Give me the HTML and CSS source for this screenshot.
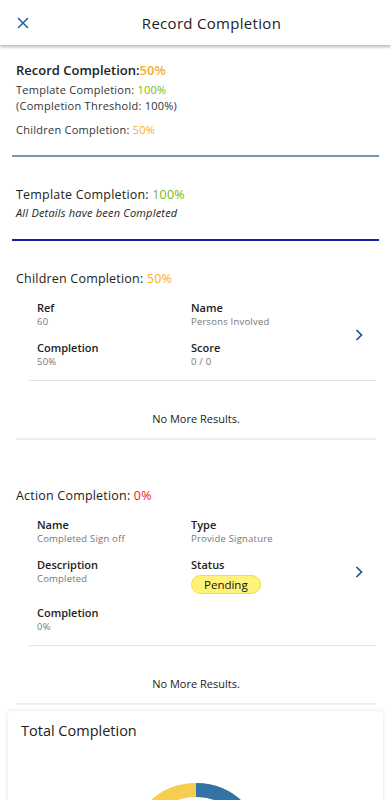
FILE: index.html
```html
<!DOCTYPE html>
<html>
<head>
    <title>Record Completion</title>
    <link rel="stylesheet" href="styles.css">
</head>
<body>
    <!-- Top bar -->
    <header class="topbar">
        <svg class="close-icon" width="12" height="12" viewBox="0 0 12 12">
            <path d="M1,1 L11,11 M11,1 L1,11" stroke="#1f5fa6" stroke-width="1.5" fill="none"/>
        </svg>
        <h1 class="title">Record Completion</h1>
    </header>

    <!-- Summary -->
    <section class="summary">
        <div class="summary-main">Record Completion:<span class="orange">50%</span></div>
        <div class="summary-line">Template Completion: <span class="green">100%</span></div>
        <div class="summary-line">(Completion Threshold: 100%)</div>
        <div class="summary-line children">Children Completion: <span class="orange">50%</span></div>
    </section>

    <hr class="rule rule-slate">

    <section class="template">
        <div class="section-head">Template Completion: <span class="green">100%</span></div>
        <div class="note">All Details have been Completed</div>
    </section>

    <hr class="rule rule-navy">

    <!-- Children -->
    <section class="block children-block">
        <div class="section-head">Children Completion: <span class="orange">50%</span></div>
        <div class="item">
            <div class="field">
                <div class="label">Ref</div>
                <div class="value">60</div>
            </div>
            <div class="field">
                <div class="label">Name</div>
                <div class="value">Persons Involved</div>
            </div>
            <div class="chevron">
                <svg width="8" height="12" viewBox="0 0 8 12"><path d="M1.5,1 L6.5,6 L1.5,11" stroke="#1c4a8f" stroke-width="1.6" fill="none"/></svg>
            </div>
            <div class="field">
                <div class="label">Completion</div>
                <div class="value">50%</div>
            </div>
            <div class="field">
                <div class="label">Score</div>
                <div class="value">0 / 0</div>
            </div>
        </div>
        <div class="no-more">No More Results.</div>
    </section>

    <!-- Actions -->
    <section class="block action-block">
        <div class="section-head">Action Completion: <span class="red">0%</span></div>
        <div class="item">
            <div class="field">
                <div class="label">Name</div>
                <div class="value">Completed Sign off</div>
            </div>
            <div class="field">
                <div class="label">Type</div>
                <div class="value">Provide Signature</div>
            </div>
            <div class="chevron">
                <svg width="8" height="12" viewBox="0 0 8 12"><path d="M1.5,1 L6.5,6 L1.5,11" stroke="#1c4a8f" stroke-width="1.6" fill="none"/></svg>
            </div>
            <div class="field">
                <div class="label">Description</div>
                <div class="value">Completed</div>
            </div>
            <div class="field">
                <div class="label">Status</div>
                <span class="pill">Pending</span>
            </div>
            <div class="field">
                <div class="label">Completion</div>
                <div class="value">0%</div>
            </div>
        </div>
        <div class="no-more">No More Results.</div>
    </section>

    <!-- Total -->
    <section class="card">
        <h2 class="card-title">Total Completion</h2>
        <div class="chart">
            <svg width="160" height="160" viewBox="0 0 160 160">
                <circle cx="80" cy="80" r="61" fill="none" stroke="#f5cd4f" stroke-width="14"/>
                <path d="M80,19 A61,61 0 0 1 80,141" fill="none" stroke="#3274a8" stroke-width="14"/>
            </svg>
        </div>
    </section>
</body>
</html>
```

FILE: styles.css
```css
body {
    margin: 0;
    font-family: "Open Sans", "Noto Sans", sans-serif;
    color: #222;
    background: #fff;
}
.topbar {
    height: 45px;
    display: flex;
    align-items: center;
    position: relative;
    background: #fff;
    box-shadow: 0 2px 3px rgba(0, 0, 0, 0.28);
}
.close-icon {
    position: absolute;
    left: 17px;
    top: 17px;
}
.title {
    flex: 1;
    margin: 0 0 0 32px;
    text-align: center;
    font-size: 15px;
    font-weight: 400;
    letter-spacing: 0.3px;
}
.orange { color: #f7ad2a; }
.green { color: #74b816; }
.red { color: #f01818; }

.summary {
    padding: 16px 16px 0;
}
.summary-main {
    font-size: 13px;
    font-weight: 600;
    line-height: 18px;
    margin-bottom: 3px;
}
.summary-line {
    font-size: 11px;
    line-height: 16px;
    color: #333;
    letter-spacing: 0.25px;
}
.summary-line.children {
    margin-top: 8px;
}
.rule {
    margin: 17px 12px 0;
    border: 0;
    height: 2px;
}
.rule-slate { background: #7d90b6; }
.rule-navy { background: #1420a8; margin-top: 17px; }

.template {
    padding: 29px 16px 0;
}
.section-head {
    font-size: 12.5px;
    line-height: 18px;
    letter-spacing: 0.2px;
}
.note {
    font-size: 11px;
    font-style: italic;
    line-height: 18px;
    letter-spacing: 0.2px;
}

.block {
    padding: 29px 15px 0 16px;
}
.action-block {
    padding-top: 47px;
}
.item {
    margin: 12px 0 0 13px;
    padding: 0 0 11px 8px;
    border-bottom: 1px solid #e4e4e4;
    display: grid;
    grid-template-columns: 154px 154px 1fr;
    row-gap: 11px;
}
.item .chevron {
    grid-column: 3;
    grid-row: 1 / span 2;
    display: flex;
    align-items: center;
    padding-left: 10px;
}
.action-block .item .chevron {
    grid-row: 1 / span 3;
    padding-bottom: 8px;
}
.label {
    font-size: 11px;
    font-weight: 600;
    line-height: 15px;
    color: #222;
}
.value {
    font-size: 9.5px;
    line-height: 14px;
    color: #777;
    letter-spacing: 0.2px;
}
.pill {
    display: inline-block;
    margin-top: 3px;
    padding: 1px 12px;
    font-size: 11.5px;
    line-height: 15px;
    background: #fff27a;
    border: 1px solid #f2df3a;
    border-radius: 10px;
    color: #111;
}
.no-more {
    text-align: center;
    font-size: 11px;
    line-height: 16px;
    padding: 30px 0 11px;
    border-bottom: 2px solid #eee;
}

.card {
    margin: 6px 8px 0;
    padding: 10px 13px 0;
    background: #fff;
    border-radius: 4px;
    box-shadow: 0 0 4px rgba(0, 0, 0, 0.12);
}
.card-title {
    margin: 0;
    font-size: 14.5px;
    font-weight: 400;
    line-height: 20px;
}
.chart {
    display: flex;
    justify-content: center;
    padding: 30px 0 40px;
}
```
